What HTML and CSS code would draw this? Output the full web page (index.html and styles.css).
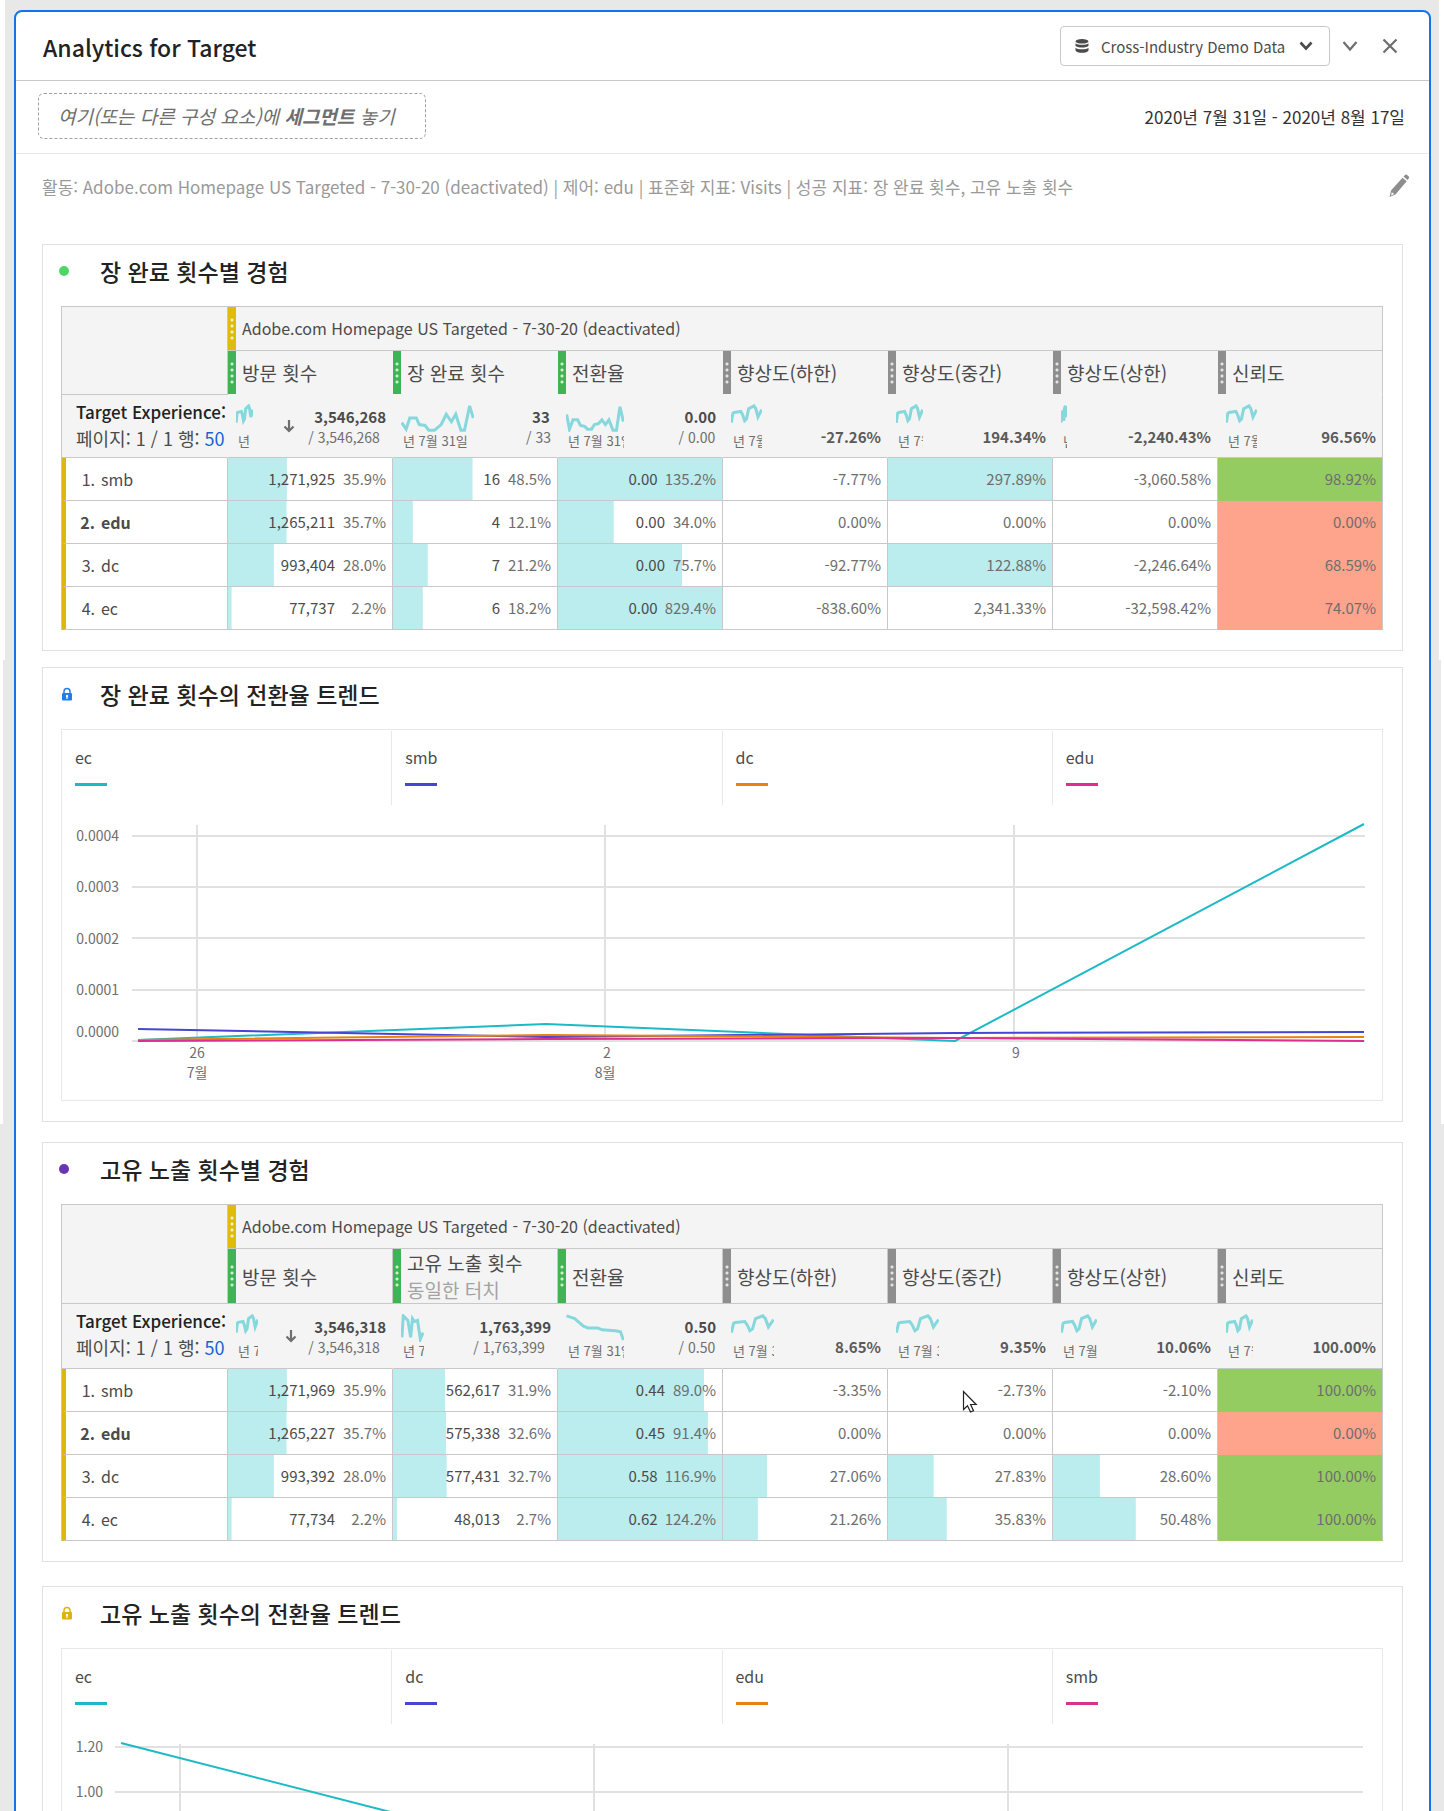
FILE: index.html
```html
<!DOCTYPE html>
<html lang="ko">
<head>
<meta charset="utf-8">
<meta name="viewport" content="width=device-width, initial-scale=1">
<title>Analytics for Target</title>
<link rel="stylesheet" href="styles.css">
</head>
<body>
<svg class="defs" aria-hidden="true">
  <defs>
    <symbol id="wave" viewBox="0 0 100 30" preserveAspectRatio="none"><polyline points="1,20 6,10 10,9 32,8 38,12 44,18 50,16 57,5 74,2 80,5 87,14 99,6"/></symbol>
    <symbol id="lock" viewBox="0 0 12 14"><path d="M3 6V4.500a3 3 0 0 1 6 0V6" fill="none" stroke="currentColor" stroke-width="1.500"/><rect x="1" y="6" width="10" height="7.500" rx="1" fill="currentColor"/><circle cx="6" cy="9" r="1.200" fill="#fff"/><path d="M6 9v3" stroke="#fff" stroke-width="1.200"/></symbol>
    <symbol id="down" viewBox="0 0 12 14"><path d="M6 1v11M1.500 7.500 6 12l4.500-4.500" fill="none" stroke="currentColor" stroke-width="2.200"/></symbol>
  </defs>
</svg>
<main class="panel">
  <header class="panel-head">
    <h1>Analytics for Target</h1>
    <div class="actions">
      <label class="suite">
        <svg width="14" height="14" viewBox="0 0 14 14" aria-hidden="true"><g fill="#4b4b4b"><ellipse cx="7" cy="2.300" rx="6.500" ry="2.300"/><path d="M.5 4.200c2 2 11 2 13 0v2.600c-1 2.400-12 2.400-13 0z"/><path d="M.5 8.800c2 2 11 2 13 0v2.600c-1 3.200-12 3.200-13 0z"/></g></svg>
        <select aria-label="Report suite"><option>Cross-Industry Demo Data</option></select>
        <svg width="14" height="10" viewBox="0 0 14 10" aria-hidden="true"><path d="M1.500 1.500 7 7.500l5.500-6" fill="none" stroke="#4b4b4b" stroke-width="2.600"/></svg>
      </label>
      <button class="icon-btn" type="button" aria-label="접기"><svg width="16" height="12" viewBox="0 0 16 12"><path d="M1.500 2 8 9.500 14.500 2" fill="none" stroke="#6e6e6e" stroke-width="2.200"/></svg></button>
      <button class="icon-btn" type="button" aria-label="닫기"><svg width="16" height="16" viewBox="0 0 16 16"><path d="m1.500 1.500 13 13m0-13-13 13" fill="none" stroke="#6e6e6e" stroke-width="2.200"/></svg></button>
    </div>
  </header>
  <div class="segment-bar">
    <div class="drop">여기(또는 다른 구성 요소)에 <b>세그먼트</b> 놓기</div>
    <button class="dates" type="button">2020년 7월 31일 - 2020년 8월 17일</button>
  </div>
  <div class="summary-line">
    <p>활동: Adobe.com Homepage US Targeted - 7-30-20 (deactivated) | 제어: edu | 표준화 지표: Visits | 성공 지표: 장 완료 횟수, 고유 노출 횟수</p>
    <button class="icon-btn" type="button" aria-label="편집"><svg width="22" height="24" viewBox="0 0 22 24"><path d="M15.500 2.500 17.300.8c.5-.4 1-.4 1.500 0l2 1.700c.5.500.5 1 .2 1.500l-1.500 2zM14.500 3.700l4.200 3.500L7.500 20.500l-6 2.500L3 16.500z" fill="#8e8e8e"/><path d="m3.800 18.200 2.400 1.900-3.200 1.300z" fill="#fff"/></svg></button>
  </div>

  <section class="card">
    <h2><span class="mark"><span class="dot dot-green"></span></span>장 완료 횟수별 경험</h2>
    <table>
      <thead>
        <tr>
          <th class="corner" rowspan="2"></th>
          <th colspan="7"><div class="head"><span class="grip grip-yellow"></span><span class="segment">Adobe.com Homepage US Targeted - 7-30-20 (deactivated)</span></div></th>
        </tr>
        <tr class="metrics">
          <th><div class="head"><span class="grip grip-green"></span>방문 횟수</div></th>
          <th><div class="head"><span class="grip grip-green"></span>장 완료 횟수</div></th>
          <th><div class="head"><span class="grip grip-green"></span>전환율</div></th>
          <th><div class="head"><span class="grip"></span>향상도(하한)</div></th>
          <th><div class="head"><span class="grip"></span>향상도(중간)</div></th>
          <th><div class="head"><span class="grip"></span>향상도(상한)</div></th>
          <th><div class="head"><span class="grip"></span>신뢰도</div></th>
        </tr>
        <tr class="totals">
          <th><div class="dim"><strong>Target Experience:</strong><span>페이지: 1 / 1 행: <a href="#rows">50</a></span></div></th>
          <td><div class="total"><span class="spark" style="width:17px"><svg><use href="#wave"/></svg><small>년 7월</small></span><svg class="sort" role="img" aria-label="내림차순"><use href="#down"/></svg><span class="sums"><b>3,546,268</b><span>/ 3,546,268</span></span></div></td>
          <td><div class="total"><span class="spark" style="width:73px"><svg viewBox="0 0 100 30" preserveAspectRatio="none"><polyline points="1,20 7,27 12,15 21,15 25,22 33,23 38,28 46,28 55,22 62,11 69,19 75,11 82,28 87,28 94,2 99,15"/></svg><small>년 7월 31일</small></span><span class="sums"><b>33</b><span>/ 33</span></span></div></td>
          <td><div class="total"><span class="spark" style="width:58px"><svg viewBox="0 0 100 30" preserveAspectRatio="none"><polyline points="1,11 6,27 12,17 20,17 25,23 32,24 37,27 44,27 49,22 56,21 62,17 68,22 74,17 81,28 87,28 93,3 99,19"/></svg><small>년 7월 31일</small></span><span class="sums"><b>0.00</b><span>/ 0.00</span></span></div></td>
          <td><div class="total"><span class="spark" style="width:31px"><svg><use href="#wave"/></svg><small>년 7월</small></span><b class="avg">-27.26%</b></div></td>
          <td><div class="total"><span class="spark" style="width:27px"><svg><use href="#wave"/></svg><small>년 7월</small></span><b class="avg">194.34%</b></div></td>
          <td><div class="total"><span class="spark" style="width:6px"><svg><use href="#wave"/></svg><small>년 7월</small></span><b class="avg">-2,240.43%</b></div></td>
          <td><div class="total"><span class="spark" style="width:31px"><svg><use href="#wave"/></svg><small>년 7월</small></span><b class="avg">96.56%</b></div></td>
        </tr>
      </thead>
      <tbody id="rows">
        <tr><th><span class="num">1.</span>smb</th><td style="--bar:35.9%">1,271,925<i>35.9%</i></td><td style="--bar:48.5%">16<i>48.5%</i></td><td style="--bar:100%">0.00<i>135.2%</i></td><td class="lift">-7.77%</td><td class="lift" style="--bar:100%">297.89%</td><td class="lift">-3,060.58%</td><td class="good">98.92%</td></tr>
        <tr class="control"><th><span class="num">2.</span>edu</th><td style="--bar:35.7%">1,265,211<i>35.7%</i></td><td style="--bar:12.1%">4<i>12.1%</i></td><td style="--bar:34%">0.00<i>34.0%</i></td><td class="lift">0.00%</td><td class="lift">0.00%</td><td class="lift">0.00%</td><td class="bad">0.00%</td></tr>
        <tr><th><span class="num">3.</span>dc</th><td style="--bar:28%">993,404<i>28.0%</i></td><td style="--bar:21.2%">7<i>21.2%</i></td><td style="--bar:75.7%">0.00<i>75.7%</i></td><td class="lift">-92.77%</td><td class="lift" style="--bar:100%">122.88%</td><td class="lift">-2,246.64%</td><td class="bad">68.59%</td></tr>
        <tr><th><span class="num">4.</span>ec</th><td style="--bar:2.2%">77,737<i>2.2%</i></td><td style="--bar:18.2%">6<i>18.2%</i></td><td style="--bar:100%">0.00<i>829.4%</i></td><td class="lift">-838.60%</td><td class="lift">2,341.33%</td><td class="lift">-32,598.42%</td><td class="bad">74.07%</td></tr>
      </tbody>
    </table>
  </section>

  <section class="card">
    <h2><span class="mark"><svg class="lock lock-blue"><use href="#lock"/></svg></span>장 완료 횟수의 전환율 트렌드</h2>
    <div class="chart">
      <ul class="legend">
        <li class="c-teal">ec</li><li class="c-indigo">smb</li><li class="c-orange">dc</li><li class="c-pink">edu</li>
      </ul>
      <svg class="plot" viewBox="0 0 1320 295" role="img" aria-label="전환율 트렌드">
        <path class="grid" d="M70 31H1303M70 82H1303M70 133H1303M70 185H1303M70 236H1303M135 20V236M543 20V236M952 20V236"/>
        <g class="ticks" text-anchor="end"><text x="57" y="36">0.0004</text><text x="57" y="87">0.0003</text><text x="57" y="139">0.0002</text><text x="57" y="190">0.0001</text><text x="57" y="232">0.0000</text></g>
        <g class="ticks" text-anchor="middle"><text x="135" y="253">26</text><text x="135" y="273">7월</text><text x="545" y="253">2</text><text x="543" y="273">8월</text><text x="954" y="253">9</text></g>
        <g class="lines">
          <polyline class="c-teal" points="76,235 484,219 893,236 1302,19"/>
          <polyline class="c-indigo" points="76,224 484,232 893,228 1302,227"/>
          <polyline class="c-orange" points="76,235 484,230 893,233 1302,232"/>
          <polyline class="c-pink" points="76,236 484,234 893,233 1302,236"/>
        </g>
      </svg>
    </div>
  </section>

  <section class="card card-apart">
    <h2><span class="mark"><span class="dot dot-purple"></span></span>고유 노출 횟수별 경험</h2>
    <table class="two-line">
      <thead>
        <tr>
          <th class="corner" rowspan="2"></th>
          <th colspan="7"><div class="head"><span class="grip grip-yellow"></span><span class="segment">Adobe.com Homepage US Targeted - 7-30-20 (deactivated)</span></div></th>
        </tr>
        <tr class="metrics">
          <th><div class="head"><span class="grip grip-green"></span>방문 횟수</div></th>
          <th><div class="head"><span class="grip grip-green"></span><span>고유 노출 횟수<em>동일한 터치</em></span></div></th>
          <th><div class="head"><span class="grip grip-green"></span>전환율</div></th>
          <th><div class="head"><span class="grip"></span>향상도(하한)</div></th>
          <th><div class="head"><span class="grip"></span>향상도(중간)</div></th>
          <th><div class="head"><span class="grip"></span>향상도(상한)</div></th>
          <th><div class="head"><span class="grip"></span>신뢰도</div></th>
        </tr>
        <tr class="totals">
          <th><div class="dim"><strong>Target Experience:</strong><span>페이지: 1 / 1 행: <a href="#rows-2">50</a></span></div></th>
          <td><div class="total"><span class="spark" style="width:22px"><svg><use href="#wave"/></svg><small>년 7월</small></span><svg class="sort" role="img" aria-label="내림차순"><use href="#down"/></svg><span class="sums"><b>3,546,318</b><span>/ 3,546,318</span></span></div></td>
          <td><div class="total"><span class="spark" style="width:23px"><svg viewBox="0 0 100 30" preserveAspectRatio="none"><polyline points="4,25 10,2 30,7 42,25 50,5 58,8 72,7 84,27 96,20"/></svg><small>년 7월</small></span><span class="sums"><b>1,763,399</b><span>/ 1,763,399</span></span></div></td>
          <td><div class="total"><span class="spark" style="width:58px"><svg viewBox="0 0 100 30" preserveAspectRatio="none"><polyline points="1,2 15,5 30,13 38,15 55,15 62,17 85,18 94,19 99,28"/></svg><small>년 7월 31일</small></span><span class="sums"><b>0.50</b><span>/ 0.50</span></span></div></td>
          <td><div class="total"><span class="spark" style="width:43px"><svg><use href="#wave"/></svg><small>년 7월 31일</small></span><b class="avg">8.65%</b></div></td>
          <td><div class="total"><span class="spark" style="width:43px"><svg><use href="#wave"/></svg><small>년 7월 31일</small></span><b class="avg">9.35%</b></div></td>
          <td><div class="total"><span class="spark" style="width:36px"><svg><use href="#wave"/></svg><small>년 7월</small></span><b class="avg">10.06%</b></div></td>
          <td><div class="total"><span class="spark" style="width:27px"><svg><use href="#wave"/></svg><small>년 7월</small></span><b class="avg">100.00%</b></div></td>
        </tr>
      </thead>
      <tbody id="rows-2">
        <tr><th><span class="num">1.</span>smb</th><td style="--bar:35.9%">1,271,969<i>35.9%</i></td><td style="--bar:31.9%">562,617<i>31.9%</i></td><td style="--bar:89%">0.44<i>89.0%</i></td><td class="lift">-3.35%</td><td class="lift pointed">-2.73%<svg class="pointer" width="16" height="24" viewBox="0 0 16 24" aria-hidden="true"><path d="M1.500 1.500v18l4-3.800 3 6.300 3-1.300-2.900-6.200h5.600z" fill="#fff" stroke="#222" stroke-width="1.200"/></svg></td><td class="lift">-2.10%</td><td class="good">100.00%</td></tr>
        <tr class="control"><th><span class="num">2.</span>edu</th><td style="--bar:35.7%">1,265,227<i>35.7%</i></td><td style="--bar:32.6%">575,338<i>32.6%</i></td><td style="--bar:91.4%">0.45<i>91.4%</i></td><td class="lift">0.00%</td><td class="lift">0.00%</td><td class="lift">0.00%</td><td class="bad">0.00%</td></tr>
        <tr><th><span class="num">3.</span>dc</th><td style="--bar:28%">993,392<i>28.0%</i></td><td style="--bar:32.7%">577,431<i>32.7%</i></td><td style="--bar:100%">0.58<i>116.9%</i></td><td class="lift" style="--bar:27.06%">27.06%</td><td class="lift" style="--bar:27.83%">27.83%</td><td class="lift" style="--bar:28.6%">28.60%</td><td class="good">100.00%</td></tr>
        <tr><th><span class="num">4.</span>ec</th><td style="--bar:2.2%">77,734<i>2.2%</i></td><td style="--bar:2.7%">48,013<i>2.7%</i></td><td style="--bar:100%">0.62<i>124.2%</i></td><td class="lift" style="--bar:21.26%">21.26%</td><td class="lift" style="--bar:35.83%">35.83%</td><td class="lift" style="--bar:50.48%">50.48%</td><td class="good">100.00%</td></tr>
      </tbody>
    </table>
  </section>

  <section class="card card-apart">
    <h2><span class="mark"><svg class="lock lock-gold"><use href="#lock"/></svg></span>고유 노출 횟수의 전환율 트렌드</h2>
    <div class="chart">
      <ul class="legend">
        <li class="c-teal">ec</li><li class="c-indigo">dc</li><li class="c-orange">edu</li><li class="c-pink">smb</li>
      </ul>
      <svg class="plot" viewBox="0 0 1320 295" role="img" aria-label="전환율 트렌드">
        <path class="grid" d="M53 23H1301M53 68H1301M53 113H1301M53 158H1301M118 20V236M532 20V236M946 20V236"/>
        <g class="ticks" text-anchor="end"><text x="41" y="28">1.20</text><text x="41" y="73">1.00</text></g>
        <g class="lines"><polyline class="c-teal" points="59,19 473,125"/></g>
      </svg>
    </div>
  </section>
</main>
</body>
</html>
```

FILE: styles.css
```css
* { box-sizing: border-box; }

html { background: #e8e8e8; }

body {
  height: 100vh;
  margin: 0;
  padding: 10px 13px 0 14px;
  overflow: hidden;
  font-family: "Noto Sans CJK KR", "Liberation Sans", sans-serif;
  font-size: 16px;
  color: #4b4b4b;
  background:
    linear-gradient(#fff, #fff) left top / 5px 660px no-repeat,
    linear-gradient(#fff, #fff) right top / 5px 660px no-repeat,
    linear-gradient(#fff, #fff) left top / 3px 1124px no-repeat,
    linear-gradient(#fff, #fff) right top / 3px 1124px no-repeat,
    #e8e8e8;
}

h1, h2, p, ul { margin: 0; padding: 0; }

button {
  padding: 0;
  border: 0;
  background: none;
  font: inherit;
  color: inherit;
}

.defs { display: none; }

.panel {
  border: 2px solid #1473e6;
  border-radius: 8px;
  background: #fff;
}

/* header */
.panel-head {
  display: flex;
  align-items: center;
  justify-content: space-between;
  height: 69px;
  padding: 0 31px 0 27px;
  border-bottom: 1px solid #c8c8c8;
}

h1 {
  padding-top: 2px;
  font-size: 23px;
  font-weight: 500;
  color: #222;
}

.actions { display: flex; align-items: center; }

.suite {
  display: flex;
  align-items: center;
  gap: 12px;
  width: 270px;
  height: 40px;
  margin-right: 12px;
  padding: 0 16px 0 14px;
  border: 1px solid #c8c8c8;
  border-radius: 4px;
}

.suite svg { flex: none; }

.suite select {
  flex: 1;
  min-width: 0;
  padding: 0;
  border: 0;
  appearance: none;
  background: none;
  font: inherit;
  font-size: 15px;
  color: #4b4b4b;
}

.icon-btn { display: flex; }
.icon-btn + .icon-btn { margin-left: 24px; }

/* segment drop zone */
.segment-bar {
  display: flex;
  align-items: center;
  justify-content: space-between;
  height: 73px;
  padding: 0 24px 2px 22px;
  border-bottom: 1px solid #e8e8e8;
}

.drop {
  width: 388px;
  padding: 8px 19px;
  border: 1px dashed #a0a0a0;
  border-radius: 6px;
  font-size: 19px;
  line-height: 28px;
  font-style: italic;
  white-space: nowrap;
  color: #6e6e6e;
}

.dates { font-size: 17px; color: #323232; }

.summary-line {
  display: flex;
  align-items: flex-start;
  justify-content: space-between;
  height: 90px;
  padding: 20px 19px 0 26px;
  font-size: 17px;
  line-height: 26px;
  color: #999;
}

/* cards */
.card {
  margin: 0 26px 16px;
  padding: 0 19px 20px 18px;
  border: 1px solid #e1e1e1;
}

.card-apart { margin-top: 20px; }
.card-apart ~ .card-apart { margin-top: 24px; }

h2 {
  display: flex;
  align-items: center;
  height: 61px;
  padding-bottom: 10px;
  font-size: 23px;
  font-weight: 500;
  color: #222;
}

.mark { flex: none; width: 39px; }

.dot {
  display: block;
  width: 10px;
  height: 10px;
  margin-left: -2px;
  border-radius: 50%;
}

.dot-green { background: #4ed66b; }
.dot-purple { background: #6a35b5; }

.lock { display: block; width: 12px; height: 14px; }
.lock-blue { color: #1f7fe8; }
.lock-gold { color: #e0b20c; }

/* freeform table */
table {
  width: 100%;
  table-layout: fixed;
  border-collapse: separate;
  border-spacing: 0;
  border: solid #c8c8c8;
  border-width: 1px 0 0 1px;
}

th, td {
  padding: 0;
  border: solid #c8c8c8;
  border-width: 0 1px 1px 0;
  font-weight: 400;
  text-align: left;
}

.corner { width: 166px; }

thead th, thead td { background: #f4f4f4; }

.head {
  display: flex;
  align-items: center;
  height: 43px;
  font-size: 19px;
  line-height: 27px;
  white-space: nowrap;
}

.segment { font-size: 16px; }

.two-line .metrics .head { height: 54px; }
.head em { display: block; font-style: normal; color: #a3a3a3; }

.grip {
  display: flex;
  flex: none;
  align-items: center;
  justify-content: center;
  align-self: stretch;
  width: 8px;
  margin-right: 6px;
  background: #8e8e8e;
}

.grip::before {
  content: "";
  width: 4px;
  height: 24px;
  background: radial-gradient(circle, rgba(255, 255, 255, .75) 1px, transparent 2px) 0 0 / 4px 6px;
}

.grip-yellow { background: #dfbb0a; }
.grip-green { background: #3fb355; }

.metrics th, .totals th, .totals td { border-right-color: #f4f4f4; }
.metrics th:last-child, .totals td:last-child { border-right-color: #c8c8c8; }
.metrics th { border-bottom-color: #f4f4f4; }
.two-line .metrics th { border-color: #c8c8c8; }

.dim {
  display: flex;
  flex-direction: column;
  height: 62px;
  padding: 3px 0 0 14px;
  overflow: hidden;
  font-size: 18px;
  line-height: 27px;
  white-space: nowrap;
}

.two-line .dim { height: 64px; }
.dim strong { font-size: 17px; font-weight: 500; color: #222; }
.dim a { color: #1565d8; text-decoration: none; }

.total {
  display: flex;
  align-items: flex-start;
  justify-content: space-between;
  height: 62px;
  padding: 9px 6px 0 8px;
}

.spark {
  flex: none;
  overflow: hidden;
  white-space: nowrap;
}

.spark svg { display: block; width: 100%; height: 28px; }
.spark polyline, #wave polyline {
  fill: none;
  stroke: #86d8dc;
  stroke-width: 3;
  vector-effect: non-scaling-stroke;
}

.spark small {
  display: block;
  padding-left: 2px;
  font-size: 13px;
  line-height: 18px;
  color: #6e6e6e;
}

.sort { flex: none; width: 12px; height: 14px; margin: 15px 0 0 16px; color: #6e6e6e; }

.sums { display: grid; padding-top: 3px; line-height: 20px; }
.sums b { padding-left: 6px; font-size: 15px; font-weight: 700; }
.sums span { font-size: 14px; color: #6e6e6e; }

.avg { margin-top: 21px; font-size: 15px; line-height: 24px; color: #5a5a5a; }

tbody th, tbody td { height: 43px; line-height: 24px; white-space: nowrap; }

tbody th { padding-left: 2px; border-left: 4px solid #dcb80c; }
.num { display: inline-block; width: 27px; margin-right: 6px; text-align: right; }
.control th { font-weight: 700; }

tbody td {
  padding-right: 6px;
  font-size: 15px;
  text-align: right;
  background: linear-gradient(#bbecee, #bbecee) 0 0 / var(--bar, 0%) 100% no-repeat;
}

tbody i {
  display: inline-block;
  min-width: 44px;
  margin-left: 7px;
  font-style: normal;
  color: #6e6e6e;
}

.lift, .good, .bad { color: #6e6e6e; }
tbody .good { background: #94cc61; border-bottom-color: #94cc61; }
tbody .bad { background: #fea48c; border-bottom-color: #fea48c; }

.pointed { position: relative; }
.pointer { position: absolute; left: 74px; top: 21px; }

/* trend charts */
.chart { border: 1px solid #e8e8e8; }

.legend { display: flex; padding-top: 1px; list-style: none; }

.legend li {
  flex: 1;
  height: 74px;
  padding: 14px 13px 0;
  line-height: 24px;
}

.legend li + li { border-left: 1px solid #e8e8e8; }

.legend li::after {
  content: "";
  display: block;
  width: 32px;
  height: 3px;
  margin-top: 14px;
  background: var(--series);
}

.c-teal { --series: #1dbac6; }
.c-indigo { --series: #4646d2; }
.c-orange { --series: #e68310; }
.c-pink { --series: #dc3091; }

.plot { display: block; width: 100%; height: auto; }
.grid { fill: none; stroke: #e1e1e1; stroke-width: 2; }
.ticks { font-size: 14px; fill: #6e6e6e; }
.lines polyline { fill: none; stroke: var(--series); stroke-width: 2; }
```
